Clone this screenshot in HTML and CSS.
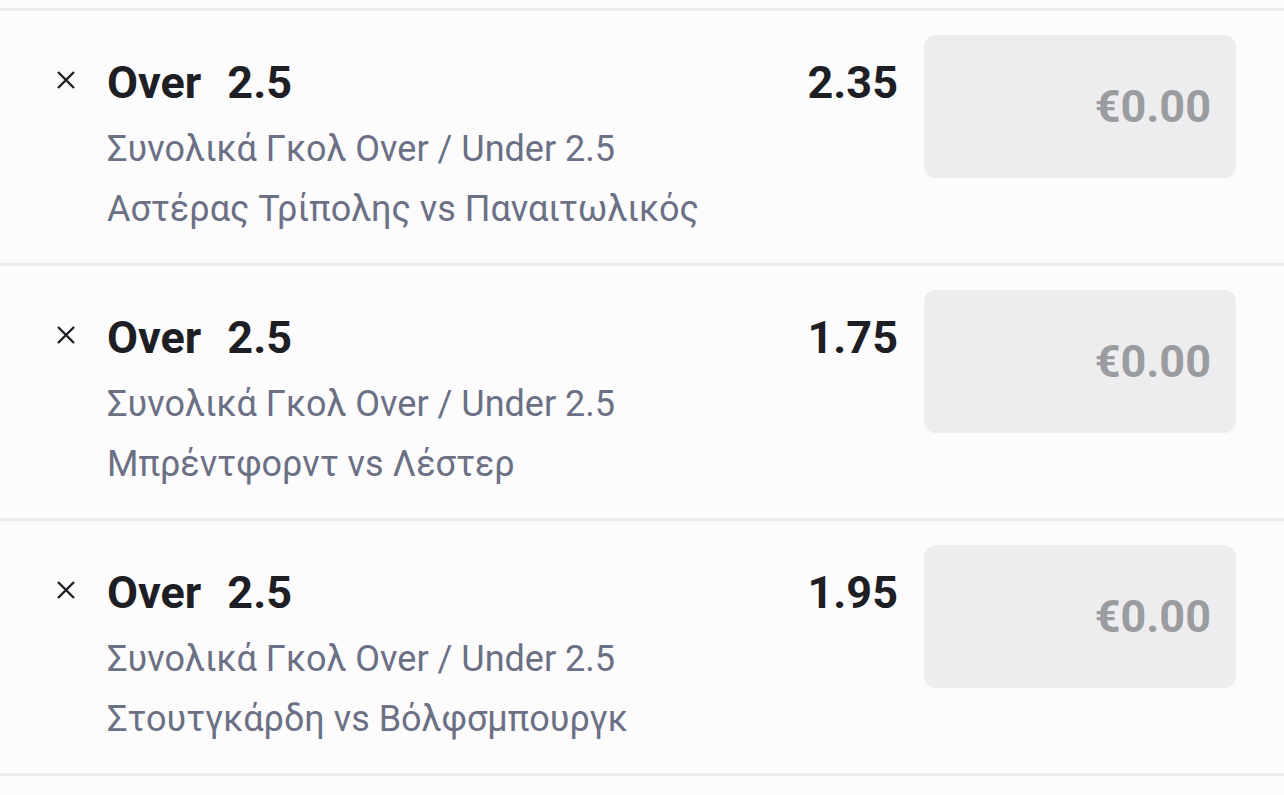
FILE: index.html
```html
<!DOCTYPE html>
<html>
<head>
    <title>Κουπόνι</title>
    <link rel="stylesheet" href="styles.css">
</head>
<body>
    <div class="betslip">
        <div class="bet-row">
            <button class="remove" aria-label="remove">
                <svg viewBox="0 0 20 20" width="20" height="20"><path d="M2 2 L18 18 M18 2 L2 18" /></svg>
            </button>
            <div class="bet-info">
                <div class="bet-title"><span>Over</span><span>2.5</span></div>
                <div class="bet-market">Συνολικά Γκολ Over / Under 2.5</div>
                <div class="bet-event">Αστέρας Τρίπολης vs Παναιτωλικός</div>
            </div>
            <div class="odds">2.35</div>
            <div class="stake">€0.00</div>
        </div>

        <div class="bet-row">
            <button class="remove" aria-label="remove">
                <svg viewBox="0 0 20 20" width="20" height="20"><path d="M2 2 L18 18 M18 2 L2 18" /></svg>
            </button>
            <div class="bet-info">
                <div class="bet-title"><span>Over</span><span>2.5</span></div>
                <div class="bet-market">Συνολικά Γκολ Over / Under 2.5</div>
                <div class="bet-event">Μπρέντφορντ vs Λέστερ</div>
            </div>
            <div class="odds">1.75</div>
            <div class="stake">€0.00</div>
        </div>

        <div class="bet-row">
            <button class="remove" aria-label="remove">
                <svg viewBox="0 0 20 20" width="20" height="20"><path d="M2 2 L18 18 M18 2 L2 18" /></svg>
            </button>
            <div class="bet-info">
                <div class="bet-title"><span>Over</span><span>2.5</span></div>
                <div class="bet-market">Συνολικά Γκολ Over / Under 2.5</div>
                <div class="bet-event">Στουτγκάρδη vs Βόλφσμπουργκ</div>
            </div>
            <div class="odds">1.95</div>
            <div class="stake">€0.00</div>
        </div>
    </div>
</body>
</html>
```

FILE: styles.css
```css
* {
    margin: 0;
    padding: 0;
    box-sizing: border-box;
}

body {
    font-family: Roboto, "Noto Sans", sans-serif;
    background-color: #fcfcfd;
    height: 100vh;
    overflow: hidden;
    padding-top: 8px;
}

.betslip {
    border-top: 3px solid #ececef;
}

.bet-row {
    display: flex;
    align-items: flex-start;
    height: 255px;
    padding: 24px 48px 0 56px;
    border-bottom: 3px solid #ececef;
}

.remove {
    background: none;
    border: none;
    width: 20px;
    height: 20px;
    margin-top: 35px;
    margin-right: 31px;
    flex-shrink: 0;
}

.remove svg {
    display: block;
    stroke: #1e1f24;
    stroke-width: 2.4;
}

.bet-info {
    flex: 1;
    padding-top: 20px;
}

.bet-title {
    font-size: 45px;
    font-weight: bold;
    line-height: 55px;
    color: #1e1f24;
    display: flex;
    gap: 26px;
}

.bet-market,
.bet-event {
    font-size: 36px;
    line-height: 60px;
    color: #6b7085;
}

.bet-market {
    margin-top: 9px;
}

.odds {
    font-size: 45px;
    font-weight: bold;
    line-height: 55px;
    color: #1e1f24;
    padding-top: 20px;
    margin-right: 26px;
}

.stake {
    width: 312px;
    height: 143px;
    background-color: #ededef;
    border-radius: 12px;
    display: flex;
    align-items: center;
    justify-content: flex-end;
    padding-right: 25px;
    font-size: 45px;
    font-weight: bold;
    color: #9b9ca0;
}
```
